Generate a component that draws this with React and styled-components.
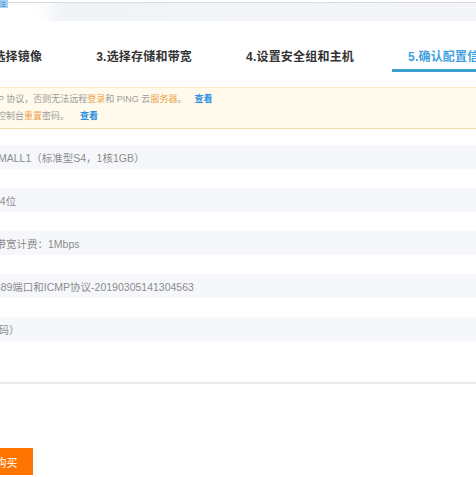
import React from "react";
import styled, { createGlobalStyle } from "styled-components";

const GlobalStyle = createGlobalStyle`
  html, body {
    margin: 0;
    padding: 0;
    background: #ffffff;
  }
  body {
    font-family: "Liberation Sans", "Noto Sans CJK SC", sans-serif;
    overflow: hidden;
  }
`;

const Page = styled.div`
  width: 476px;
  height: 477px;
  overflow: hidden;
  display: flex;
  flex-direction: column;
`;

const TopStrip = styled.div`
  position: relative;
  margin-top: 2px;
  height: 18px;
  border-top: 1px solid #d9dcdf;
  background: linear-gradient(90deg, #ffffff 0px, #ffffff 36px, #f1f4f7 60px, #f3f5f8 100%);
`;

const Badge = styled.span`
  position: absolute;
  left: 0;
  top: -3px;
  width: 8px;
  height: 8px;
  background: #a9d2f2;
  color: #3a86c8;
  font-size: 6px;
  line-height: 8px;
  overflow: hidden;
`;

const Tabs = styled.div`
  height: 64px;
  box-sizing: border-box;
  padding-top: 21px;
  display: flex;
  align-items: flex-start;
  gap: 22px;
  margin-left: -33px;
  white-space: nowrap;
`;

const Tab = styled.div`
  height: 30px;
  box-sizing: border-box;
  padding: 0 16px;
  display: flex;
  align-items: center;
  font-size: 12px;
  letter-spacing: 0.2px;
  font-weight: 700;
  color: ${(p) => (p.$active ? "#419fe0" : "#333333")};
  border-bottom: 3px solid ${(p) => (p.$active ? "#3aa0d2" : "transparent")};
  flex-shrink: 0;
  ${(p) => (p.$active ? "width: 140px;" : "")}
`;

const Notice = styled.div`
  margin-top: 2px;
  height: 42px;
  box-sizing: border-box;
  padding-top: 3px;
  background: #fffaec;
  border-top: 1px solid #fcebc4;
  border-bottom: 1px solid #efdcac;
  font-size: 9px;
  line-height: 17px;
  color: #9a9a9a;
  white-space: nowrap;
`;

const NoticeLine = styled.div`
  margin-left: ${(p) => p.$shift || 0}px;
`;

const Mark = styled.span`
  color: #eea24a;
`;

const Link = styled.span`
  color: #2f92e0;
  font-weight: 700;
  margin-left: ${(p) => p.$gap || 8}px;
`;

const RowList = styled.div`
  padding-top: 16px;
  display: flex;
  flex-direction: column;
  gap: 19px;
`;

const Row = styled.div`
  height: 24px;
  background: #f5f7fa;
  display: flex;
  align-items: center;
`;

const Value = styled.span`
  font-size: 10.5px;
  color: #8c8c8c;
  white-space: nowrap;
  margin-left: ${(p) => p.$shift || 0}px;
`;

const Divider = styled.div`
  margin-top: 41px;
  height: 2px;
  background: #e8ebee;
`;

const Footer = styled.div`
  margin-top: 64px;
  display: flex;
`;

const BuyButton = styled.div`
  margin-left: -20px;
  width: 53px;
  height: 27px;
  background: #ff7300;
  color: #ffffff;
  font-size: 11px;
  display: flex;
  align-items: center;
  justify-content: center;
`;

const rows = [
  { text: "MALL1（标准型S4，1核1GB）", shift: -2 },
  { text: "64位", shift: -6 },
  { text: "按带宽计费：1Mbps", shift: -15 },
  { text: "3389端口和ICMP协议-20190305141304563", shift: -11 },
  { text: "（码）", shift: -12 },
];

export default function App() {
  return (
    <>
      <GlobalStyle />
      <Page>
        <TopStrip>
          <Badge>注</Badge>
        </TopStrip>
        <Tabs>
          <Tab>2.选择镜像</Tab>
          <Tab>3.选择存储和带宽</Tab>
          <Tab>4.设置安全组和主机</Tab>
          <Tab $active>5.确认配置信息</Tab>
        </Tabs>
        <Notice>
          <NoticeLine $shift={-2}>
            P 协议，否则无法远程<Mark>登录</Mark>和 PING 云<Mark>服务器</Mark>。
            <Link>查看</Link>
          </NoticeLine>
          <NoticeLine $shift={-3}>
            控制台<Mark>重置</Mark>密码。<Link $gap={11}>查看</Link>
          </NoticeLine>
        </Notice>
        <RowList>
          {rows.map((r) => (
            <Row key={r.text}>
              <Value $shift={r.shift}>{r.text}</Value>
            </Row>
          ))}
        </RowList>
        <Divider />
        <Footer>
          <BuyButton>购买</BuyButton>
        </Footer>
      </Page>
    </>
  );
}
